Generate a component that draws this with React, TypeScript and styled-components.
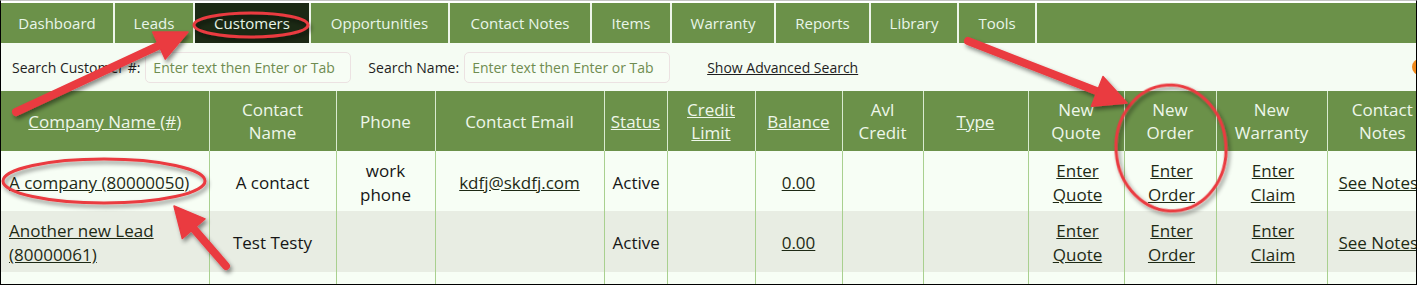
import React from 'react';
import styled, { createGlobalStyle } from 'styled-components';

const Global = createGlobalStyle`
  html, body { margin: 0; padding: 0; background: #fff; }
  body { font-family: "Open Sans", "Noto Sans", sans-serif; }
  * { box-sizing: border-box; }
`;

const Frame = styled.div`
  position: relative;
  width: 1417px;
  height: 285px;
  border-top: 1px solid #c4c4c4;
  border-left: 1px solid #000;
  border-right: 1px solid #000;
  border-bottom: 1px solid #000;
  overflow: hidden;
  background: #fff;
`;

const TabBar = styled.nav`
  display: flex;
  gap: 2px;
  height: 40px;
  margin-top: 2px;
  background: #eef5ea;
`;

const Tab = styled.a<{ $w: number; $active?: boolean }>`
  flex: 0 0 ${p => p.$w}px;
  display: flex;
  align-items: center;
  justify-content: center;
  background: ${p => (p.$active ? '#1b2914' : '#6b9149')};
  color: #e9f6e9;
  font-size: 15px;
  text-decoration: none;
  white-space: nowrap;
`;

const TabFiller = styled.div`
  flex: 1;
  background: #6b9149;
`;

const SearchBar = styled.div`
  display: flex;
  align-items: center;
  height: 48px;
  padding-left: 11px;
  background: #f5fcf3;
  font-size: 14px;
  color: #1e1e1e;
`;

const Label = styled.label<{ $gap?: number }>`
  margin-left: ${p => p.$gap ?? 0}px;
  white-space: nowrap;
`;

const SearchInput = styled.input`
  width: 206px;
  height: 31px;
  margin-left: 5px;
  padding: 0 7px;
  border: 1px solid #ece2e2;
  border-radius: 5px;
  background: #f7fdf5;
  font-family: inherit;
  font-size: 14px;
  color: #333;
  outline: none;
  &::placeholder { color: #6f8c50; }
`;

const AdvancedLink = styled.a`
  margin-left: 37px;
  color: #1e1e1e;
  text-decoration: underline;
  white-space: nowrap;
`;

const HelpDot = styled.span`
  margin-left: auto;
  margin-right: -12px;
  width: 16px;
  height: 16px;
  border-radius: 50%;
  background: #f08a1c;
  flex: 0 0 16px;
`;

const Table = styled.table`
  table-layout: fixed;
  width: 1436px;
  border-collapse: collapse;
  font-size: 17px;
`;

const HeadCell = styled.th`
  height: 60px;
  padding: 0 6px;
  background: #6b9149;
  color: #eef7ea;
  font-weight: normal;
  line-height: 23px;
  text-align: center;
  vertical-align: middle;
  border-left: 1px solid #d9ead0;
  &:first-child { border-left: none; }
`;

const HeadLink = styled.a`
  color: #eef7ea;
  text-decoration: underline;
`;

const Row = styled.tr<{ $alt?: boolean; $h?: number }>`
  height: ${p => p.$h ?? 60}px;
  background: ${p => (p.$alt ? '#e8ede3' : '#f7fef5')};
`;

const Cell = styled.td<{ $left?: boolean; $pl?: number }>`
  padding: 3px 8px 0 ${p => p.$pl ?? 8}px;
  color: #161616;
  line-height: 24px;
  text-align: ${p => (p.$left ? 'left' : 'center')};
  vertical-align: middle;
  white-space: ${p => (p.$left ? 'normal' : 'nowrap')};
  border-left: 1px solid #a9d08f;
  &:first-child { border-left: none; }
`;

const CellLink = styled.a`
  color: #1e2a15;
  text-decoration: underline;
  white-space: nowrap;
`;

const WrapLink = styled(CellLink)`
  white-space: normal;
`;

const Overlay = styled.svg`
  position: absolute;
  left: -1px;
  top: -1px;
  width: 1417px;
  height: 286px;
  pointer-events: none;
`;

const RED = '#ea3a40';

type Pt = [number, number];

function Arrow({ tail, tip, w = 8, len = 32, half = 15 }: { tail: Pt; tip: Pt; w?: number; len?: number; half?: number }) {
  const dx = tip[0] - tail[0];
  const dy = tip[1] - tail[1];
  const d = Math.hypot(dx, dy);
  const ux = dx / d;
  const uy = dy / d;
  const nx = -uy;
  const ny = ux;
  const bx = tip[0] - ux * len;
  const by = tip[1] - uy * len;
  const pts = [
    [bx + nx * half, by + ny * half],
    [tip[0], tip[1]],
    [bx - nx * half, by - ny * half],
  ]
    .map(p => p.join(','))
    .join(' ');
  return (
    <g filter="url(#shadow)">
      <line x1={tail[0]} y1={tail[1]} x2={bx + ux * 2} y2={by + uy * 2} stroke={RED} strokeWidth={w} strokeLinecap="round" />
      <polygon points={pts} fill={RED} strokeLinejoin="round" stroke={RED} strokeWidth={1.5} />
    </g>
  );
}

const tabs: { label: string; w: number; active?: boolean }[] = [
  { label: 'Dashboard', w: 112 },
  { label: 'Leads', w: 78 },
  { label: 'Customers', w: 114, active: true },
  { label: 'Opportunities', w: 137 },
  { label: 'Contact Notes', w: 140 },
  { label: 'Items', w: 78 },
  { label: 'Warranty', w: 102 },
  { label: 'Reports', w: 93 },
  { label: 'Library', w: 86 },
  { label: 'Tools', w: 76 },
];

const colWidths = [208, 127, 99, 169, 63, 88, 87, 81, 105, 96, 92, 111, 110];

type Customer = { name: string; contact?: string; phone?: React.ReactNode; email?: string; h: number };

const rows: Customer[] = [
  { name: 'A company (80000050)', contact: 'A contact', phone: <>work<br />phone</>, email: 'kdfj@skdfj.com', h: 60 },
  { name: 'Another new Lead (80000061)', contact: 'Test Testy', h: 61 },
  { name: 'Another customer to add (80000062)', h: 60 },
];

export default function App() {
  return (
    <>
      <Global />
      <Frame>
        <TabBar>
          {tabs.map(t => (
            <Tab key={t.label} $w={t.w} $active={t.active}>{t.label}</Tab>
          ))}
          <TabFiller />
        </TabBar>
        <SearchBar>
          <Label>Search Customer #:</Label>
          <SearchInput placeholder="Enter text then Enter or Tab" />
          <Label $gap={17}>Search Name:</Label>
          <SearchInput placeholder="Enter text then Enter or Tab" />
          <AdvancedLink>Show Advanced Search</AdvancedLink>
          <HelpDot />
        </SearchBar>
        <Table>
          <colgroup>
            {colWidths.map((w, i) => (
              <col key={i} style={{ width: w }} />
            ))}
          </colgroup>
          <thead>
            <tr>
              <HeadCell><HeadLink>Company Name (#)</HeadLink></HeadCell>
              <HeadCell>Contact<br />Name</HeadCell>
              <HeadCell>Phone</HeadCell>
              <HeadCell>Contact Email</HeadCell>
              <HeadCell><HeadLink>Status</HeadLink></HeadCell>
              <HeadCell><HeadLink>Credit<br />Limit</HeadLink></HeadCell>
              <HeadCell><HeadLink>Balance</HeadLink></HeadCell>
              <HeadCell>Avl<br />Credit</HeadCell>
              <HeadCell><HeadLink>Type</HeadLink></HeadCell>
              <HeadCell>New<br />Quote</HeadCell>
              <HeadCell>New<br />Order</HeadCell>
              <HeadCell>New<br />Warranty</HeadCell>
              <HeadCell>Contact<br />Notes</HeadCell>
            </tr>
          </thead>
          <tbody>
            {rows.map((r, i) => (
              <Row key={i} $alt={i % 2 === 1} $h={r.h}>
                <Cell $left><WrapLink>{r.name}</WrapLink></Cell>
                <Cell>{r.contact}</Cell>
                <Cell>{r.phone}</Cell>
                <Cell>{r.email && <CellLink>{r.email}</CellLink>}</Cell>
                <Cell>Active</Cell>
                <Cell />
                <Cell><CellLink>0.00</CellLink></Cell>
                <Cell />
                <Cell />
                <Cell $pl={11}><CellLink>Enter<br />Quote</CellLink></Cell>
                <Cell $pl={11}><CellLink>Enter<br />Order</CellLink></Cell>
                <Cell $pl={11}><CellLink>Enter<br />Claim</CellLink></Cell>
                <Cell $left $pl={11}><CellLink>See Notes</CellLink></Cell>
              </Row>
            ))}
          </tbody>
        </Table>
        <Overlay viewBox="0 0 1417 286">
          <defs>
            <filter id="shadow" x="-20%" y="-20%" width="140%" height="140%">
              <feDropShadow dx="2" dy="3" stdDeviation="2" floodColor="#000" floodOpacity="0.45" />
            </filter>
          </defs>
          <ellipse cx={251} cy={25} rx={57} ry={12} fill="none" stroke={RED} strokeWidth={3} filter="url(#shadow)" />
          <ellipse cx={104} cy={181} rx={101} ry={22} fill="none" stroke={RED} strokeWidth={3} filter="url(#shadow)" />
          <ellipse cx={1171} cy={148} rx={55} ry={63} fill="none" stroke={RED} strokeWidth={3} filter="url(#shadow)" transform="rotate(-4 1171 148)" />
          <Arrow tail={[16, 112]} tip={[188, 32]} />
          <Arrow tail={[968, 41]} tip={[1127, 103]} half={16} />
          <Arrow tail={[226, 266]} tip={[174, 206]} len={30} />
        </Overlay>
      </Frame>
    </>
  );
}
